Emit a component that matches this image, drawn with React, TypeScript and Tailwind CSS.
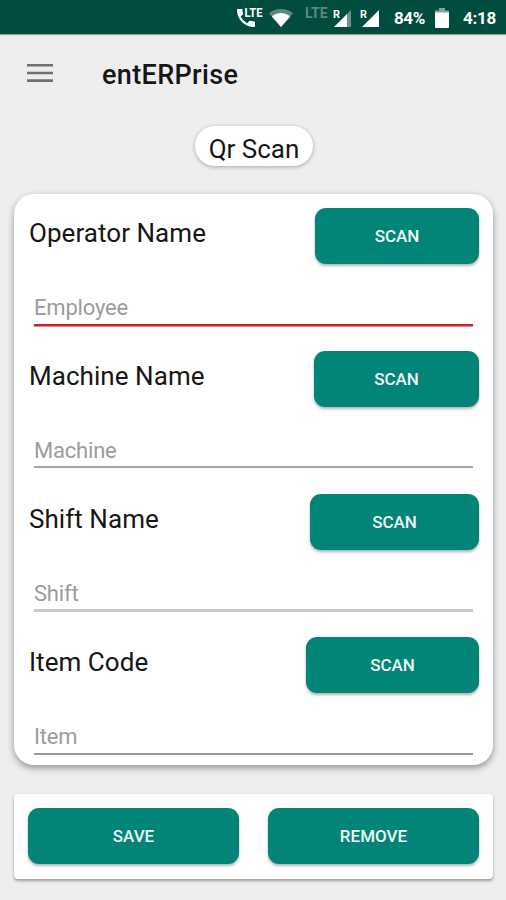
import { useState } from 'react'

const fields = [
  { label: 'Operator Name', hint: 'Employee', button: 'w-[164px]', line: 'h-[3px] border-b border-[#e58a92] bg-[#c8202f]' },
  { label: 'Machine Name', hint: 'Machine', button: 'w-[165px]', line: '-mt-[1px] h-[2px] bg-[#a5a5a5]' },
  { label: 'Shift Name', hint: 'Shift', button: 'w-[169px]', line: '-mt-[1px] h-[3px] bg-[#c9c9c9]' },
  { label: 'Item Code', hint: 'Item', button: 'w-[173px]', line: 'h-[2px] bg-[#999]' },
]

function CallIcon() {
  return (
    <svg width="28" height="20" viewBox="0 0 28 20" className="shrink-0">
      <path
        transform="translate(-2 -2.200)"
        fill="#fff"
        d="M6.600 11.800c1.400 2.800 3.800 5.100 6.600 6.600l2.200-2.200c.3-.3.7-.4 1-.2 1.100.4 2.300.6 3.600.6.6 0 1 .4 1 1v3.500c0 .6-.4 1-1 1-9.400 0-17-7.600-17-17 0-.6.4-1 1-1H7.500c.6 0 1 .4 1 1 0 1.300.2 2.500.6 3.600.1.4 0 .8-.2 1z"
      />
      <text x="8.500" y="10" fontSize="12" fontWeight="700" fill="#fff" textLength="18" lengthAdjust="spacingAndGlyphs">
        LTE
      </text>
    </svg>
  )
}

function WifiIcon() {
  return (
    <svg width="24" height="18" viewBox="0 0 24 18" className="mt-[1px] ml-[5px] shrink-0">
      <path d="M12 18 0 4.200C3.200 1.500 7.300 0 12 0s8.800 1.500 12 4.200z" fill="#fff" fillOpacity="0.35" />
      <path d="M12 18 2.800 7.400C5.300 5.300 8.500 4 12 4s6.700 1.300 9.200 3.400z" fill="#fff" />
    </svg>
  )
}

function SignalIcon({ weak = false }: { weak?: boolean }) {
  return (
    <svg width="20" height="27" viewBox="0 -4 20 27" className="mt-[2px] shrink-0">
      {weak ? (
        <>
          <path d="M18 1v17H14V5z" fill="#fff" fillOpacity="0.4" />
          <path d="M14 5v13H1z" fill="#fff" />
        </>
      ) : (
        <path d="M19 1v17H2z" fill="#fff" />
      )}
      <path d="M0 0h8v9.500H0z" fill="#004d40" />
      <text x="0" y="8.500" fontSize="11.500" fontWeight="700" fill="#fff" textLength="7" lengthAdjust="spacingAndGlyphs">
        R
      </text>
    </svg>
  )
}

function StatusBar() {
  return (
    <header className="flex h-[34px] items-center bg-[#004d40] pl-[236px] text-white shadow-[0_1px_1px_rgba(0,0,0,0.35)]">
      <CallIcon />
      <WifiIcon />
      <span className="-mt-[8px] ml-[12px] w-[28px] text-[14px] leading-[16px] font-bold text-white/35">LTE</span>
      <SignalIcon weak />
      <span className="w-[7px]" />
      <SignalIcon />
      <span className="mt-[3px] ml-[14px] w-[41px] text-[17px] font-bold tracking-[-0.4px]">84%</span>
      <svg width="14" height="20" viewBox="0 0 14 20" className="mt-[2px] shrink-0">
        <path d="M4 0h6v2.500h4V6H0V2.500h4z" fill="#fff" fillOpacity="0.5" />
        <path d="M0 4.500h14V19a1 1 0 0 1-1 1H1a1 1 0 0 1-1-1z" fill="#fff" />
      </svg>
      <span className="mt-[3px] ml-[14px] text-[17px] font-bold tracking-[-0.3px]">4:18</span>
    </header>
  )
}

function Button({ text, className, onClick }: { text: string; className: string; onClick?: () => void }) {
  return (
    <button
      type="button"
      onClick={onClick}
      className={`h-[56px] shrink-0 rounded-[11px] bg-[#028577] pt-[2px] text-[17px] font-medium text-[#eef8f6] shadow-[0_2px_3px_rgba(0,0,0,0.3)] ${className}`}
    >
      {text}
    </button>
  )
}

export default function App() {
  const [values, setValues] = useState<string[]>(fields.map(() => ''))

  const update = (index: number, value: string) => {
    setValues(values.map((v, i) => (i === index ? value : v)))
  }

  return (
    <div className="h-[900px] w-[506px] overflow-hidden bg-[#eeeeee] font-[Roboto,sans-serif] text-[#161616]">
      <StatusBar />

      <div className="flex h-[80px] items-center pl-[27px]">
        <button type="button" aria-label="Menu" className="-mt-[2px]">
          <svg width="26" height="18" viewBox="0 0 26 18" fill="#707070">
            <path d="M0 0h26v2.600H0zM0 7.700h26v2.600H0zM0 15.300h26v2.600H0z" />
          </svg>
        </button>
        <h1 className="mt-[2px] ml-[49px] text-[27px] font-medium tracking-[0.35px]">entERPrise</h1>
      </div>

      <div className="mt-[12px] ml-[195px] flex h-[40px] w-[118px] items-center justify-center rounded-full bg-white pt-[6px] text-[26px] shadow-[0_1px_4px_rgba(0,0,0,0.3)]">
        Qr Scan
      </div>

      <main className="mt-[28px] mr-[13px] ml-[14px] h-[571px] rounded-[20px] bg-white shadow-[0_3px_7px_rgba(0,0,0,0.38)]">
        {fields.map((field, i) => (
          <section key={field.label} className="h-[143px] pt-[14px] pr-[14px] pl-[15px]">
            <div className="flex h-[56px] justify-between">
              <label htmlFor={field.hint} className="mt-[5px] text-[26px] leading-[40px] tracking-[0.05px]">
                {field.label}
              </label>
              <Button text="SCAN" className={field.button} />
            </div>
            <div className="mt-[27px] mr-[6px] ml-[5px]">
              <input
                id={field.hint}
                value={values[i]}
                onChange={(e) => update(i, e.target.value)}
                placeholder={field.hint}
                className="mb-[1px] block h-[32px] w-full text-[22px] tracking-[-0.2px] outline-none placeholder:text-[#9c9c9c]"
              />
              <div className={field.line} />
            </div>
          </section>
        ))}
      </main>

      <footer className="mt-[29px] mr-[13px] ml-[14px] flex h-[85px] justify-between rounded-[4px] bg-white px-[14px] pt-[14px] shadow-[0_2px_3px_rgba(0,0,0,0.35)]">
        <Button text="SAVE" className="w-[211px]" />
        <Button text="REMOVE" className="w-[211px]" onClick={() => setValues(fields.map(() => ''))} />
      </footer>
    </div>
  )
}
